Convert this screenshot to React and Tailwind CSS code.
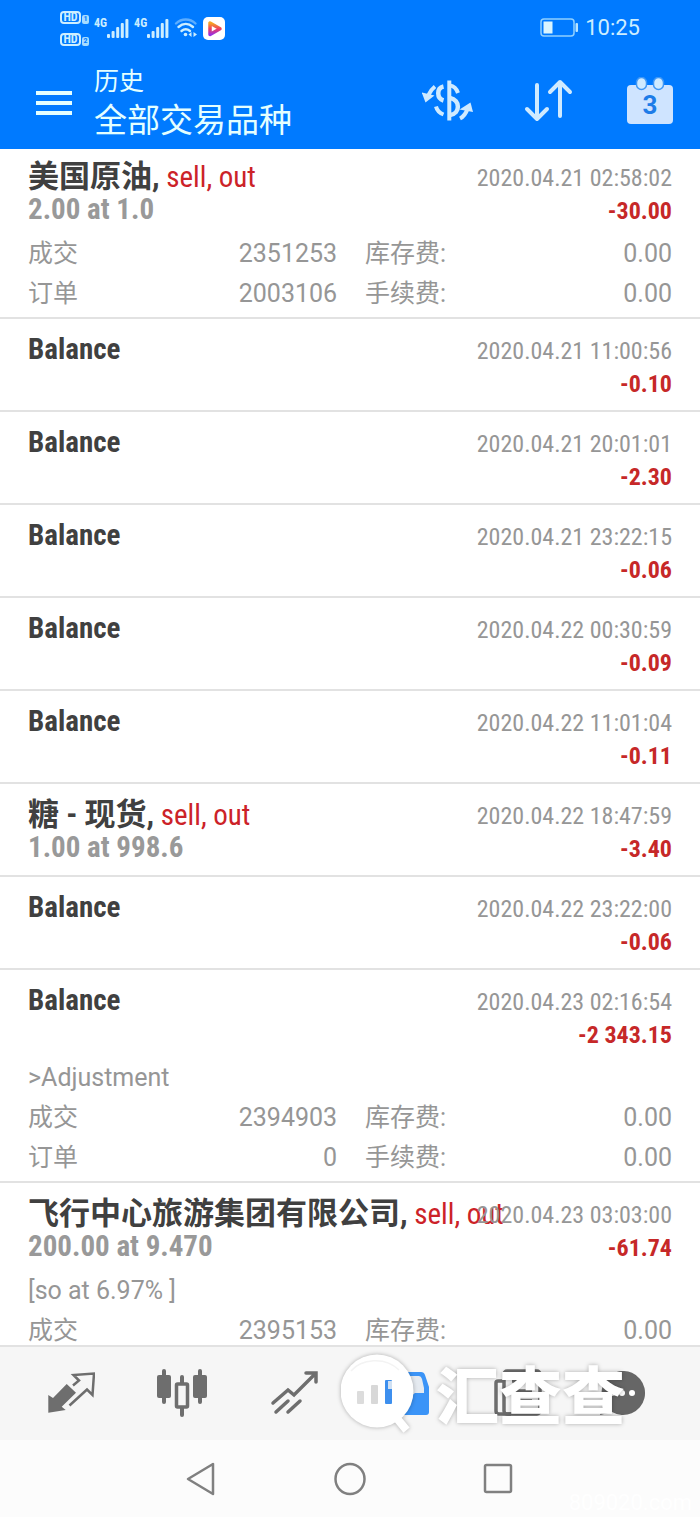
const DETAIL_FONT = 'font-["Roboto","Noto_Sans_CJK_SC",sans-serif]';

const deals = [
  { title: '美国原油,', side: 'sell, out', volume: '2.00 at 1.0', time: '2020.04.21 02:58:02', profit: '-30.00', deal: '2351253', order: '2003106' },
  { time: '2020.04.21 11:00:56', profit: '-0.10' },
  { time: '2020.04.21 20:01:01', profit: '-2.30' },
  { time: '2020.04.21 23:22:15', profit: '-0.06' },
  { time: '2020.04.22 00:30:59', profit: '-0.09' },
  { time: '2020.04.22 11:01:04', profit: '-0.11' },
  { title: '糖 - 现货,', side: 'sell, out', volume: '1.00 at 998.6', time: '2020.04.22 18:47:59', profit: '-3.40' },
  { time: '2020.04.22 23:22:00', profit: '-0.06' },
  { time: '2020.04.23 02:16:54', profit: '-2 343.15', comment: '>Adjustment', deal: '2394903', order: '0' },
  { title: '飞行中心旅游集团有限公司,', side: 'sell, out', volume: '200.00 at 9.470', time: '2020.04.23 03:03:00', profit: '-61.74', comment: '[so at 6.97% ]', deal: '2395153' },
];

function HdBadge({ n }) {
  return (
    <span className="flex items-end gap-px">
      <span className="flex h-[13px] w-[21px] items-center justify-center rounded-[4px] border-2 border-[#cdeeff] text-[12px] leading-none font-bold">HD</span>
      <span className="flex h-[9px] w-[7px] items-center justify-center rounded-[2px] bg-[#a6dcff] text-[8px] leading-none font-bold text-[#007aff]">{n}</span>
    </span>
  );
}

function Signal() {
  return (
    <span className="flex items-start">
      <span className="text-[12px] leading-[11px] font-bold">4G</span>
      <svg width="22" height="21" viewBox="0 0 22 21" fill="#cdeeff" aria-hidden="true">
        <rect x="0" y="16" width="3" height="4" rx="1" />
        <rect x="4.6" y="13" width="3" height="7" rx="1" />
        <rect x="9.2" y="9" width="3" height="11" rx="1" />
        <rect x="13.8" y="5" width="3" height="15" rx="1" />
        <rect x="18.4" y="1" width="3" height="19" rx="1" />
      </svg>
    </span>
  );
}

function StatusBar() {
  return (
    <div className="flex h-14 items-center justify-between px-[60px] text-[#cdeeff]">
      <div className="flex items-center gap-[5px]">
        <div className="flex flex-col gap-[9px]">
          <HdBadge n="1" />
          <HdBadge n="2" />
        </div>
        <Signal />
        <Signal />
        <svg width="24" height="22" viewBox="0 0 24 22" fill="none" stroke="#cdeeff" strokeWidth="2.4" strokeLinecap="round" aria-hidden="true">
          <path d="M2 6.5C7.5 1.2 16 1.2 21.5 6.5" stroke="#5cadff" />
          <path d="M4.5 10C9 6 14.5 6 19 10" />
          <path d="M7.5 14C10.5 11.500 13 11.500 16 14" />
          <circle cx="11.5" cy="17.5" r="1.8" fill="#cdeeff" stroke="none" />
          <path d="M17.5 15l-3 2.500 3 2.500zM19.500 15l3.500 2.500-3.500 2.500z" fill="#cdeeff" stroke="none" />
        </svg>
        <svg width="22" height="23" viewBox="0 0 22 23" aria-hidden="true">
          <defs>
            <linearGradient id="play" x1="0" y1="0" x2="0" y2="1">
              <stop offset="0" stopColor="#f5a623" />
              <stop offset="0.5" stopColor="#ee3f5c" />
              <stop offset="1" stopColor="#9a2fe0" />
            </linearGradient>
          </defs>
          <rect width="22" height="23" rx="5" fill="#fff" />
          <path d="M7 6v11.500l10-5.700z" fill="#fff" stroke="url(#play)" strokeWidth="3.500" strokeLinejoin="round" />
        </svg>
      </div>
      <div className="flex items-center gap-[6px]">
        <svg width="39" height="20" viewBox="0 0 39 20" aria-hidden="true">
          <rect x="1" y="1" width="33" height="17" rx="3" fill="none" stroke="#8fd0ff" strokeWidth="1.5" />
          <rect x="3.500" y="3.500" width="9" height="12" fill="#d9f5ff" />
          <rect x="35.500" y="5" width="2.500" height="9" rx="1" fill="#b8e5ff" />
        </svg>
        <span className='font-["Roboto",sans-serif] text-[22px] leading-none'>10:25</span>
      </div>
    </div>
  );
}

function AppBar() {
  return (
    <div className="flex h-[93px] items-center pr-[27px] pl-9">
      <button type="button" aria-label="菜单" className="flex w-9 flex-col gap-[6px]">
        <span className="h-1 bg-[#e4ffff]" />
        <span className="h-1 bg-[#e4ffff]" />
        <span className="h-1 bg-[#e4ffff]" />
      </button>
      <div className="ml-[22px] grow text-[#e4ffff]">
        <p className="text-[25px] leading-[36px]">历史</p>
        <h1 className="text-[33px] leading-[42px]">全部交易品种</h1>
      </div>
      <div className="flex items-center pb-1">
        <button type="button" aria-label="币种">
          <svg width="52" height="44" viewBox="0 -1 52 44" fill="none" stroke="#cfeaff" strokeWidth="4" aria-hidden="true">
            <path d="M27.3 0.500V40.500" />
            <path d="M21.500 6.500C14.500 8 14.500 18.500 21.500 20.500" strokeWidth="4.500" />
            <path d="M28 5.500C32 6 34.500 8.500 36 13" />
            <path d="M28 18C38.500 20 38.500 33.500 28 35" strokeWidth="4.500" />
            <path d="M14 26.500C15 30.500 17.500 33 21.500 34.500" />
            <path d="M13 6.500Q8.500 10 6.500 15" />
            <path d="M-0.300 12.500L12.500 15.500L3.500 22.500Z" fill="#cfeaff" stroke="none" />
            <path d="M38 38.500Q43 36 45.500 29" />
            <path d="M48.500 22.500L37.500 29.500L51 32Z" fill="#cfeaff" stroke="none" />
          </svg>
        </button>
        <button type="button" aria-label="排序" className="ml-[50px]">
          <svg width="50" height="44" viewBox="0 0 50 44" fill="none" stroke="#cfeaff" strokeWidth="4" strokeLinecap="round" strokeLinejoin="round" aria-hidden="true">
            <path d="M13 6v34M3 30l10 10 10-10" />
            <path d="M36 37V3M26 13L36 3l10 10" />
          </svg>
        </button>
        <button type="button" aria-label="日期" className="ml-[53px]">
          <svg width="46" height="48" viewBox="0 0 46 48" aria-hidden="true">
            <rect x="0" y="8" width="46" height="39" rx="4" fill="#cfe4ff" />
            <rect x="9.500" y="0.500" width="10" height="12" rx="5" fill="#cfeaff" stroke="#3f97f5" strokeWidth="1.500" />
            <rect x="26.500" y="0.500" width="10" height="12" rx="5" fill="#cfeaff" stroke="#3f97f5" strokeWidth="1.500" />
            <text x="23" y="37" textAnchor="middle" fontSize="26" fontWeight="700" fontFamily="Roboto, sans-serif" fill="#1e7ce8">3</text>
          </svg>
        </button>
      </div>
    </div>
  );
}

function Detail({ a, b, c }) {
  return (
    <dl className={'flex h-10 items-center text-[25px] text-[#969696] ' + DETAIL_FONT}>
      <div className="flex w-[48%] justify-between">
        <dt>{a}</dt>
        <dd>{b}</dd>
      </div>
      <div className="ml-7 flex grow justify-between">
        <dt>{c}</dt>
        <dd>0.00</dd>
      </div>
    </dl>
  );
}

function Deal({ d }) {
  return (
    <li className="border-b-2 border-[#e2e2e2] px-7">
      <div className="flex h-[91px] items-start justify-between pt-[14px] whitespace-nowrap">
        <div className="w-0 text-[29px] leading-[33px] font-bold">
          {d.title ? (
            <p className="h-[33px] text-[#404040]">
              <span className="text-[31px]">{d.title}</span> <span className="font-normal text-[#cc2228]">{d.side}</span>
            </p>
          ) : (
            <p className="text-[#404040]">Balance</p>
          )}
          <p className="text-[#999]">{d.volume}</p>
        </div>
        <div className="pt-[2px] text-right text-2xl leading-[33px]">
          <p className="text-[#969696]">{d.time}</p>
          <p className="font-bold text-[#c62828]">{d.profit}</p>
        </div>
      </div>
      {d.deal && (
        <div className="-mt-[3px] pb-[3px]">
          {d.comment && <p className={'text-[25px] leading-10 text-[#969696] ' + DETAIL_FONT}>{d.comment}</p>}
          <Detail a="成交" b={d.deal} c="库存费:" />
          {d.order && <Detail a="订单" b={d.order} c="手续费:" />}
        </div>
      )}
    </li>
  );
}

function Watermark() {
  return (
    <div className="pointer-events-none absolute top-[7px] left-[341px] flex items-end text-white drop-shadow-[0_0_2px_rgba(0,0,0,0.3)]">
      <svg width="76" height="82" viewBox="0 0 76 82" aria-hidden="true">
        <circle cx="36" cy="37" r="36.500" fill="#fff" />
        <path d="M54 62l9 11" stroke="#fff" strokeWidth="8" strokeLinecap="square" />
        <path d="M10 17C20 5 44 2 58 16" fill="none" stroke="#f3f3f3" strokeWidth="1.500" />
        <rect x="16" y="37" width="7" height="13" rx="1" fill="#dcdcdc" />
        <rect x="30" y="31" width="7" height="19" rx="1" fill="#d8d8d8" />
        <rect x="44" y="26" width="7" height="24" rx="1" fill="#3d8fee" />
        <path d="M47 27h4v8h-4z" fill="#cfe0f3" />
      </svg>
      <span className="ml-[19px] text-[63px] leading-[76px] font-black">汇查查</span>
    </div>
  );
}

const TAB = 'flex h-full flex-1 items-center justify-center';

function TabBar() {
  return (
    <nav className="relative flex h-[95px] shrink-0 items-center border-t-2 border-[#e2e2e2] bg-[#f6f6f6] px-[14px] pb-0.5">
      <button type="button" aria-label="报价" className={TAB}>
        <svg width="50" height="46" viewBox="0 0 50 46" aria-hidden="true">
          <path d="M3.300 25L8 28L21.700 14L31 22.700L16.700 36.700L20.700 40L3.300 42.700Z" fill="#6e6e6e" />
          <path d="M28 15.500L34 10.500L28.500 5L49 3.500L47.500 25L42 19.500L24.500 35.500" fill="none" stroke="#6e6e6e" strokeWidth="2.500" />
        </svg>
      </button>
      <button type="button" aria-label="图表" className={TAB}>
        <svg width="50" height="50" viewBox="0 0 50 50" fill="#6e6e6e" aria-hidden="true">
          <rect x="0" y="7" width="14" height="23" rx="2" />
          <rect x="5" y="1" width="4" height="35" rx="2" />
          <rect x="36" y="7" width="14" height="23" rx="2" />
          <rect x="41" y="1" width="4" height="35" rx="2" />
          <rect x="23" y="7" width="4" height="42" rx="2" />
          <rect x="19.500" y="16" width="11" height="23" rx="1" fill="#f6f6f6" stroke="#6e6e6e" strokeWidth="3.500" />
        </svg>
      </button>
      <button type="button" aria-label="交易" className={TAB}>
        <svg width="48" height="46" viewBox="0 0 48 46" fill="none" stroke="#6e6e6e" strokeWidth="3.500" strokeLinecap="round" aria-hidden="true">
          <path d="M3 33l15-13 6 5L45 4M36 3h10v9" />
          <path d="M6 42l12-11M18 42l12-11" />
        </svg>
      </button>
      <button type="button" aria-label="历史" className={TAB}>
        <svg width="46" height="44" viewBox="0 0 46 44" aria-hidden="true">
          <path d="M6 1h32q3 0 4 3l4 12v25q0 3-3 3H3q-3 0-3-3V16l3-12q1-3 3-3z" fill="#3b94f7" />
          <path d="M9 5h27q2 0 3 3l2 9v5H32q-9 8-18 0H4v-5z" fill="#e5eaf0" />
        </svg>
      </button>
      <button type="button" aria-label="新闻" className={TAB}>
        <svg width="48" height="48" viewBox="0 0 48 48" fill="none" stroke="#6e6e6e" strokeWidth="3.500" aria-hidden="true">
          <rect x="10" y="2" width="36" height="43" rx="3" />
          <path d="M10 12H4q-2 0-2 2v28q0 3 3 3h12M18 12h20M18 22h20M18 32h20" />
        </svg>
      </button>
      <button type="button" aria-label="聊天" className={TAB}>
        <svg width="60" height="44" viewBox="0 0 60 44" aria-hidden="true">
          <path d="M22 0a22 22 0 1 1-10 41L0 44l4-12A22 22 0 0 1 22 0z" fill="#666" />
          <circle cx="12" cy="22" r="3" fill="#fff" />
          <circle cx="22" cy="22" r="3" fill="#fff" />
          <circle cx="32" cy="22" r="3" fill="#fff" />
        </svg>
      </button>
      <Watermark />
    </nav>
  );
}

function SystemNav() {
  return (
    <div className="relative flex h-[77px] shrink-0 items-center justify-center gap-[116px] bg-[#fcfcfc]">
      <button type="button" aria-label="返回">
        <svg width="32" height="34" viewBox="0 0 32 34" fill="none" stroke="#808080" strokeWidth="2.500" strokeLinejoin="round" aria-hidden="true">
          <path d="M27 2v30L2 17z" />
        </svg>
      </button>
      <button type="button" aria-label="主页">
        <svg width="32" height="34" viewBox="0 0 32 34" fill="none" stroke="#808080" strokeWidth="2.500" aria-hidden="true">
          <ellipse cx="16" cy="17" rx="14.500" ry="15" />
        </svg>
      </button>
      <button type="button" aria-label="最近">
        <svg width="32" height="34" viewBox="0 0 32 34" fill="none" stroke="#808080" strokeWidth="2.500" aria-hidden="true">
          <rect x="3" y="3" width="26" height="27" rx="1.500" />
        </svg>
      </button>
      <span className='absolute right-2 bottom-0.5 font-["Roboto",sans-serif] text-[22px] leading-6 text-white'>809020.com</span>
    </div>
  );
}

export default function App() {
  return (
    <div className='flex h-screen flex-col bg-white font-["Roboto_Condensed","Roboto","Noto_Sans_CJK_SC",sans-serif]'>
      <header className="shrink-0 bg-[#007aff]">
        <StatusBar />
        <AppBar />
      </header>
      <main className="min-h-0 flex-1 overflow-y-auto [scrollbar-width:none]">
        <ul className="-mt-[3px]">
          {deals.map((d) => (
            <Deal key={d.time} d={d} />
          ))}
        </ul>
      </main>
      <TabBar />
      <SystemNav />
    </div>
  );
}
